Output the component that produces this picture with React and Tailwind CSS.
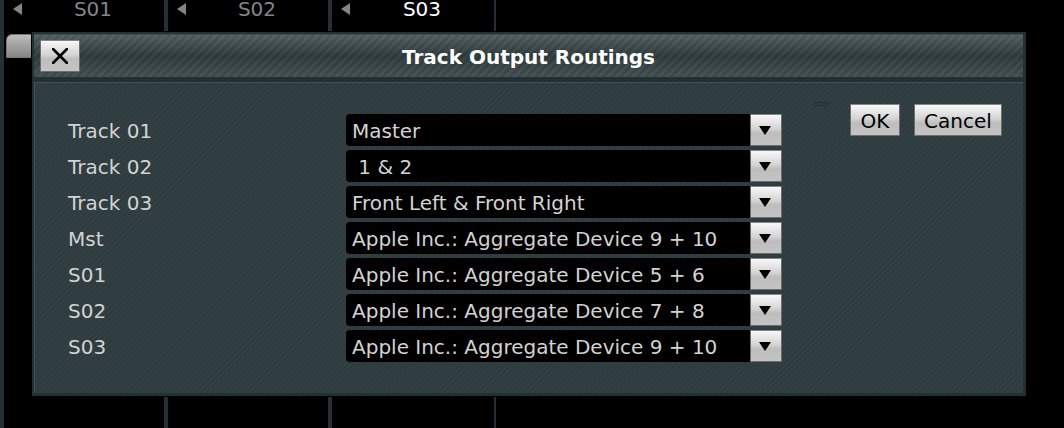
import { useState } from "react";

const strips = [
  { name: "S01", edge: "border-r-4", color: "text-[#858585]" },
  { name: "S02", edge: "border-r-4", color: "text-[#858585]" },
  { name: "S03", edge: "border-r-2", color: "text-white" },
];

const outputs = [
  "Master",
  "\u00a01 & 2",
  "Front Left & Front Right",
  "Apple Inc.: Aggregate Device 5 + 6",
  "Apple Inc.: Aggregate Device 7 + 8",
  "Apple Inc.: Aggregate Device 9 + 10",
];

const tracks = [
  { id: "track-01", name: "Track 01", output: outputs[0] },
  { id: "track-02", name: "Track 02", output: outputs[1] },
  { id: "track-03", name: "Track 03", output: outputs[2] },
  { id: "mst", name: "Mst", output: outputs[5] },
  { id: "s01", name: "S01", output: outputs[3] },
  { id: "s02", name: "S02", output: outputs[4] },
  { id: "s03", name: "S03", output: outputs[5] },
];

const metal =
  "border border-t-[#858585] border-x-[#6d6d6d] border-b-[#6d6d6d] bg-[linear-gradient(to_bottom,#f8f8f8_0%,#d4d4d4_45%,#bdbdbd_60%,#c4c4c4_100%)]";

function Strip({ strip }) {
  return (
    <div className={`w-41 shrink-0 border-[#243032] ${strip.edge}`}>
      <div className={`grid grid-cols-[1fr_auto_1fr] items-center pl-2 leading-[18px] ${strip.color}`}>
        <svg className="ml-px h-3 w-[10px] text-[#858585]" viewBox="0 0 10 12" aria-hidden="true">
          <path d="M0 6 L9 0 V12 Z" fill="currentColor" />
        </svg>
        <span className="pl-[10px]">{strip.name}</span>
      </div>
      {strip.name === "S01" && (
        <div className="ml-[2px] mt-4 h-6 w-12 rounded-tl-md border border-[#777] bg-linear-to-b from-[#bdbdbd] to-[#858585]" />
      )}
    </div>
  );
}

function RoutingRow({ track }) {
  const [value, setValue] = useState(track.output);
  return (
    <div className="grid grid-cols-[278px_1fr] items-center">
      <label htmlFor={track.id} className="pt-[2px]">
        {track.name}
      </label>
      <div className="grid grid-cols-[1fr_32px]">
        <select
          id={track.id}
          value={value}
          onChange={(e) => setValue(e.target.value)}
          className="col-span-2 col-start-1 row-start-1 h-8 w-full appearance-none rounded bg-black pl-[6px] pr-8 pt-[2px] text-[#d3d3d3] outline-none"
        >
          {outputs.map((o) => (
            <option key={o} value={o}>
              {o}
            </option>
          ))}
        </select>
        <span
          className={`pointer-events-none z-10 col-start-2 row-start-1 flex items-center justify-center pr-[2px] ${metal}`}
        >
          <svg className="h-[9px] w-3" viewBox="0 0 12 9" aria-hidden="true">
            <path d="M0 0 H12 L6 9 Z" fill="black" />
          </svg>
        </span>
      </div>
    </div>
  );
}

export default function App() {
  return (
    <div className="relative min-h-screen overflow-hidden bg-black font-['DejaVu_Sans',sans-serif] text-xl leading-6">
      <div className="flex h-screen border-l-4 border-[#243032]">
        {strips.map((s) => (
          <Strip key={s.name} strip={s} />
        ))}
      </div>

      <section
        role="dialog"
        aria-labelledby="dialog-title"
        className="absolute left-8 right-[38px] top-8 border-2 border-b-3 border-r-3 border-[#243032] bg-[#243032] shadow-[0_0_0_1px_black]"
      >
        <header className="grid h-[43px] grid-cols-[40px_1fr_40px] items-center border-t border-[#3f5355] bg-[repeating-linear-gradient(135deg,rgba(0,0,0,0.1)_0px,rgba(255,255,255,0.045)_3px,rgba(0,0,0,0.1)_6px),linear-gradient(to_bottom,#536062_0%,#2e3a3c_50%,#445153_100%)] px-[6px]">
          <button type="button" aria-label="Close" className={`flex h-8 w-10 items-center justify-center ${metal}`}>
            <svg className="size-4" viewBox="0 0 16 16" aria-hidden="true">
              <path d="M1 1 L15 15 M15 1 L1 15" stroke="black" strokeWidth="2.6" strokeLinecap="round" />
            </svg>
          </button>
          <h1 id="dialog-title" className="pt-[2px] text-center font-bold text-white">
            Track Output Routings
          </h1>
        </header>

        <div className="mt-[5px] flex items-start border-l border-t border-[#3f5355] bg-[#2f3c3f] bg-[repeating-linear-gradient(135deg,rgba(0,0,0,0.04)_0px,rgba(130,170,175,0.05)_2px,rgba(0,0,0,0.04)_4px)] pb-[31px] pl-[33px] pr-[21px] pt-[21px]">
          <div className="mt-[10px] grid w-[714px] gap-1 text-[#d3d3d3]">
            {tracks.map((t) => (
              <RoutingRow key={t.id} track={t} />
            ))}
          </div>
          <div className="-mt-[2px] ml-8 h-1 w-[14px] border border-[#243032]" />
          <div className="ml-auto flex gap-[14px]">
            <button type="button" className={`h-8 w-[50px] pt-[2px] ${metal}`}>
              OK
            </button>
            <button type="button" className={`h-8 w-22 pt-[2px] ${metal}`}>
              Cancel
            </button>
          </div>
        </div>
      </section>
    </div>
  );
}
